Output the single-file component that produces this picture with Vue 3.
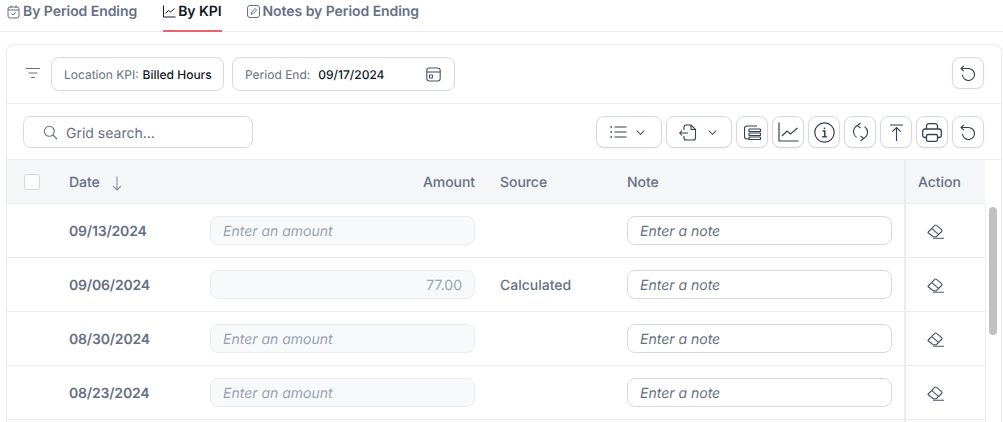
<template>
  <div class="page">
    <nav class="tabs">
      <a class="tab">
        <svg width="13" height="14" viewBox="0 0 13 14" fill="none" stroke="currentColor" stroke-width="1"><rect x="1" y="2" width="11" height="11" rx="2"/><path d="M1 5h11M4 .5V3M9 .5V3M4.500 8.500l1.500 1.500 2.700-2.700"/></svg>
        By Period Ending
      </a>
      <a class="tab active">
        <svg width="13" height="13" viewBox="0 0 13 13" fill="none" stroke="currentColor" stroke-width="1"><path d="M.5 .5v11.500h12M2.500 8.500l3-3 2 1.500 4-3.500"/></svg>
        By KPI
      </a>
      <a class="tab">
        <svg width="13" height="13" viewBox="0 0 13 13" fill="none" stroke="currentColor" stroke-width="1"><rect x=".5" y=".5" width="12" height="12" rx="2.500"/><path d="M4 9.200l.5-2 3.600-3.700 1.500 1.500L6 8.700z"/></svg>
        Notes by Period Ending
      </a>
    </nav>

    <section class="card">
      <div class="filters">
        <svg class="filter-icon" width="14" height="10" viewBox="0 0 14 10" fill="none" stroke="#667085" stroke-width="1"><path d="M0 .5h14M2.500 5h9M5 9.500h4"/></svg>
        <div class="chip chip-kpi"><span class="chip-label">Location KPI:</span><span class="chip-value">Billed Hours</span></div>
        <div class="chip chip-date">
          <span class="chip-label">Period End:</span><span class="chip-value date-value">09/17/2024</span>
          <svg class="chip-cal" width="15" height="15" viewBox="0 0 15 15" fill="none" stroke="#475467" stroke-width="1.100"><rect x=".8" y="1" width="13.400" height="13" rx="2.500"/><path d="M.8 5h13.400"/><rect x="3.500" y="8" width="3" height="3" rx=".5"/></svg>
        </div>
        <button class="btn reset-top">
          <svg width="16" height="16" viewBox="0 0 16 16" fill="none" stroke="#344054" stroke-width="1.100"><path d="M1 3.500h7.500a6 6 0 1 1-6 6.200M3.800 .8 1 3.500l2.800 2.700"/></svg>
        </button>
      </div>

      <div class="toolbar">
        <label class="search">
          <svg width="15" height="15" viewBox="0 0 15 15" fill="none" stroke="#667085" stroke-width="1.100"><circle cx="6.300" cy="6.300" r="5"/><path d="M10 10l4 4"/></svg>
          <input type="text" placeholder="Grid search..." />
        </label>
        <div class="actions">
          <button class="btn wide">
            <svg width="17" height="12" viewBox="0 0 17 12" fill="none" stroke="#344054" stroke-width="1.100"><path d="M4.500 1h12M4.500 6h12M4.500 11h12"/><path d="M.5 1h1.500M.5 6h1.500M.5 11h1.500" stroke-width="1.400"/></svg>
            <svg width="9" height="5" viewBox="0 0 9 5" fill="none" stroke="#475467" stroke-width="1.100"><path d="M.7.7l3.800 3.600L8.300.7"/></svg>
          </button>
          <button class="btn wide gap-lg">
            <svg width="18" height="17" viewBox="0 0 18 17" fill="none" stroke="#344054" stroke-width="1.100"><path d="M5 6V3a2 2 0 0 1 2-2h5l4.500 4.500V14a2 2 0 0 1-2 2H7a2 2 0 0 1-2-2v-2"/><path d="M12 1v4.500h4.500M9 9H.7M3 6.500.7 9 3 11.500"/></svg>
            <svg width="9" height="5" viewBox="0 0 9 5" fill="none" stroke="#475467" stroke-width="1.100"><path d="M.7.7l3.800 3.600L8.300.7"/></svg>
          </button>
          <button class="btn">
            <svg width="17" height="15" viewBox="0 0 17 15" fill="none" stroke="#344054" stroke-width="1.200"><path d="M13 1H3a2.500 2.500 0 0 0-2.500 2.500v8A2.500 2.500 0 0 0 3 14h2"/><rect x="5" y="4" width="11.500" height="2.500" rx=".6"/><rect x="5" y="8" width="11.500" height="2.500" rx=".6"/><rect x="5" y="12" width="11.500" height="2.500" rx=".6"/></svg>
          </button>
          <button class="btn">
            <svg width="21" height="20" viewBox="0 0 21 20" fill="none" stroke="#344054" stroke-width="1.200"><path d="M1 .5V19h19.500M4 14l5-5 3.500 3 7-6"/></svg>
          </button>
          <button class="btn">
            <svg width="21" height="21" viewBox="0 0 21 21" fill="none" stroke="#344054" stroke-width="1.200"><circle cx="10.500" cy="10.500" r="9.700"/><path d="M8.500 9h2.300v5.500M8.300 14.700h4.500" stroke-width="1.500"/><circle cx="10.500" cy="6.300" r=".9" fill="#344054" stroke="none"/></svg>
          </button>
          <button class="btn">
            <svg width="15" height="20" viewBox="0 0 15 20" fill="none" stroke="#344054" stroke-width="1.100"><path d="M4.500 3.600A6.800 6.800 0 0 0 3.500 15.400M10.500 16.400A6.800 6.800 0 0 0 11.500 4.600"/><path d="M7.500 1 4.300 3.600 7.500 6M7.500 14l3.200 2.400L7.500 19"/></svg>
          </button>
          <button class="btn">
            <svg width="13" height="17" viewBox="0 0 13 17" fill="none" stroke="#344054" stroke-width="1.100"><path d="M0 1h13M6.500 17V3.500M2.300 7.700l4.200-4.200 4.200 4.200"/></svg>
          </button>
          <button class="btn">
            <svg width="20" height="19" viewBox="0 0 20 19" fill="none" stroke="#344054" stroke-width="1.300"><path d="M4.500 6V3a2.300 2.300 0 0 1 2.300-2.300h6.400A2.300 2.300 0 0 1 15.500 3v3M4.500 14.500H3A2.300 2.300 0 0 1 .7 12.200V8.300A2.300 2.300 0 0 1 3 6h14a2.300 2.300 0 0 1 2.300 2.300v3.900a2.300 2.300 0 0 1-2.300 2.300h-1.500"/><rect x="4.500" y="11.500" width="11" height="6.800" rx="1.500"/></svg>
          </button>
          <button class="btn">
            <svg width="16" height="16" viewBox="0 0 16 16" fill="none" stroke="#344054" stroke-width="1.100"><path d="M1 3.500h7.500a6 6 0 1 1-6 6.200M3.800 .8 1 3.500l2.800 2.700"/></svg>
          </button>
        </div>
      </div>

      <div class="grid-head">
        <div class="cell-check"><span class="checkbox"></span></div>
        <div class="cell-date">Date
          <svg class="sort" width="10" height="15" viewBox="0 0 10 15" fill="none" stroke="#8a93a6" stroke-width="1.100"><path d="M5 .5V14M1 10l4 4 4-4"/></svg>
        </div>
        <div class="cell-amount head-amount">Amount</div>
        <div class="cell-source">Source</div>
        <div class="cell-note">Note</div>
        <div class="cell-action">Action</div>
      </div>

      <div class="grid-body">
        <div class="rows">
          <div v-for="row in rows" :key="row.date" class="grid-row">
            <div class="cell-check"></div>
            <div class="cell-date">{{ row.date }}</div>
            <div class="cell-amount">
              <input class="amount-input" type="text" :value="row.amount" placeholder="Enter an amount" readonly />
            </div>
            <div class="cell-source">{{ row.source }}</div>
            <div class="cell-note">
              <input class="note-input" type="text" placeholder="Enter a note" />
            </div>
            <div class="cell-action">
              <svg width="18" height="15" viewBox="0 0 18 15" fill="none" stroke="#475467" stroke-width="1.100"><path d="M1.200 8 7.800 1.400a1.300 1.300 0 0 1 1.800 0l5 4.300a1.300 1.300 0 0 1 0 1.800l-5.300 5.200H6.200L1.200 8.800a.6.6 0 0 1 0-.8zM4.600 4.400l6.800 6M6 14.300h11"/></svg>
            </div>
          </div>
          <div class="grid-row"><div class="cell-action"></div></div>
        </div>
        <div class="scrollbar"><div class="thumb"></div></div>
      </div>
    </section>
  </div>
</template>

<script setup>
const rows = [
  { date: '09/13/2024', amount: '', source: '' },
  { date: '09/06/2024', amount: '77.00', source: 'Calculated' },
  { date: '08/30/2024', amount: '', source: '' },
  { date: '08/23/2024', amount: '', source: '' }
];
</script>

<style>
html, body {
  margin: 0;
  background: #fff;
  overflow: hidden;
}
</style>

<style scoped>
.page {
  height: 422px;
  overflow: hidden;
  font-family: Inter, "Liberation Sans", sans-serif;
  font-size: 14px;
  color: #667085;
  box-sizing: border-box;
  text-rendering: geometricPrecision;
}
input {
  text-rendering: geometricPrecision;
}

/* tabs */
.tabs {
  display: flex;
  height: 32px;
  box-sizing: border-box;
  border-bottom: 1px solid #eaecf0;
  padding-left: 7px;
  gap: 25px;
}
.tab {
  display: flex;
  align-items: flex-start;
  gap: 3px;
  height: 32px;
  box-sizing: border-box;
  font-weight: 600;
  line-height: 24px;
  letter-spacing: -0.06px;
  color: #667085;
}
.tab:first-child {
  margin-right: 1px;
}
.tab svg {
  margin-top: 5px;
}
.tab.active {
  gap: 2px;
  color: #101828;
  border-bottom: 2px solid #e9656b;
}

/* card */
.card {
  margin: 12px 1px 0 6px;
  border: 1px solid #eaecf0;
  border-bottom: 0;
  border-radius: 8px 8px 0 0;
}
.filters {
  display: flex;
  align-items: flex-start;
  height: 59px;
  box-sizing: border-box;
  padding: 12px 17px 0 19px;
  border-bottom: 1px solid #eaecf0;
}
.filter-icon {
  margin: 11px 11px 0 0;
}
.chip {
  display: flex;
  align-items: center;
  height: 34px;
  box-sizing: border-box;
  border: 1px solid #d5d9e3;
  border-radius: 8px;
  font-size: 12px;
}
.chip-kpi {
  width: 173px;
  padding-left: 12px;
}
.chip-date {
  width: 223px;
  margin-left: 8px;
  padding-left: 12px;
}
.chip-label {
  color: #667085;
}
.chip-value {
  color: #101828;
  font-weight: 500;
  margin-left: 4px;
}
.date-value {
  margin-left: 8px;
}
.chip-cal {
  margin-left: auto;
  margin-right: 13px;
}
.btn {
  display: flex;
  align-items: center;
  justify-content: center;
  width: 32px;
  height: 32px;
  padding: 0;
  box-sizing: border-box;
  background: #fff;
  border: 1px solid #d5d9e3;
  border-radius: 8px;
  box-shadow: 0 1px 2px rgba(16, 24, 40, 0.05);
}
.btn.wide {
  width: 66px;
  padding-right: 3px;
  gap: 9px;
}
.btn.gap-lg {
  gap: 11px;
}
.reset-top {
  margin-left: auto;
}

/* toolbar */
.toolbar {
  display: flex;
  justify-content: space-between;
  height: 56px;
  box-sizing: border-box;
  padding: 12px 17px 0 16px;
  border-bottom: 1px solid #eaecf0;
}
.search {
  display: flex;
  align-items: center;
  gap: 8px;
  width: 230px;
  height: 32px;
  box-sizing: border-box;
  padding-left: 19px;
  border: 1px solid #d5d9e3;
  border-radius: 8px;
}
.search input {
  width: 170px;
  border: 0;
  outline: 0;
  padding: 2px 0 0;
  font: inherit;
  color: #667085;
}
.search input::placeholder {
  color: #667085;
  opacity: 1;
}
.actions {
  display: flex;
  gap: 4px;
}

/* grid */
.grid-head,
.grid-row {
  display: grid;
  grid-template-columns: 62px 141px 265px 152px 265px 12px 81px;
  box-sizing: border-box;
  align-items: center;
  font-weight: 500;
}
.grid-head {
  width: 978px;
  height: 44px;
  background: #f5f6f8;
  border-bottom: 1px solid #eaecf0;
  letter-spacing: -0.05px;
}
.grid-head > div:not(.cell-check) {
  padding-top: 2px;
}
.grid-row {
  height: 54px;
  border-bottom: 1px solid #eaecf0;
}
.cell-check {
  grid-column: 1;
  padding-left: 17px;
  display: flex;
}
.checkbox {
  width: 16px;
  height: 16px;
  box-sizing: border-box;
  background: #fff;
  border: 1px solid #d5d9e3;
  border-radius: 3px;
}
.cell-date {
  grid-column: 2;
  display: flex;
  align-items: center;
  gap: 12px;
}
.grid-row .cell-date {
  padding-top: 2px;
  font-weight: 600;
  letter-spacing: -0.18px;
}
.sort {
  margin-top: 2px;
}
.cell-amount {
  grid-column: 3;
}
.head-amount {
  text-align: right;
}
.cell-source {
  grid-column: 4;
  padding-left: 25px;
}
.grid-row .cell-source {
  padding-top: 2px;
}
.cell-note {
  grid-column: 5;
}
.cell-action {
  grid-column: 7;
  align-self: stretch;
  display: flex;
  align-items: center;
  box-sizing: border-box;
  border-left: 2px solid #eaecf0;
  padding-left: 12px;
}
.grid-row .cell-action {
  padding-left: 21px;
}
.cell-action svg {
  margin-top: 2px;
}
.amount-input,
.note-input {
  display: block;
  width: 100%;
  height: 29px;
  box-sizing: border-box;
  padding: 2px 12px 0;
  border-radius: 8px;
  outline: 0;
  font: inherit;
  font-weight: 400;
}
.amount-input {
  background: #f8f9fb;
  border: 1px solid #eaecf0;
  color: #98a2b3;
  text-align: right;
}
.amount-input:placeholder-shown {
  text-align: left;
}
.note-input {
  background: #fff;
  border: 1px solid #d5d9e3;
}
.amount-input::placeholder {
  color: #98a2b3;
  font-style: italic;
  opacity: 1;
}
.note-input::placeholder {
  color: #667085;
  font-style: italic;
  opacity: 1;
}
.grid-body {
  display: flex;
}
.rows {
  width: 978px;
  flex: none;
}
.scrollbar {
  flex: 1;
  border-left: 1px solid #eaecf0;
  padding: 3px 4px 0 3px;
}
.thumb {
  height: 128px;
  background: #c1c1c1;
  border-radius: 4px;
}
</style>
